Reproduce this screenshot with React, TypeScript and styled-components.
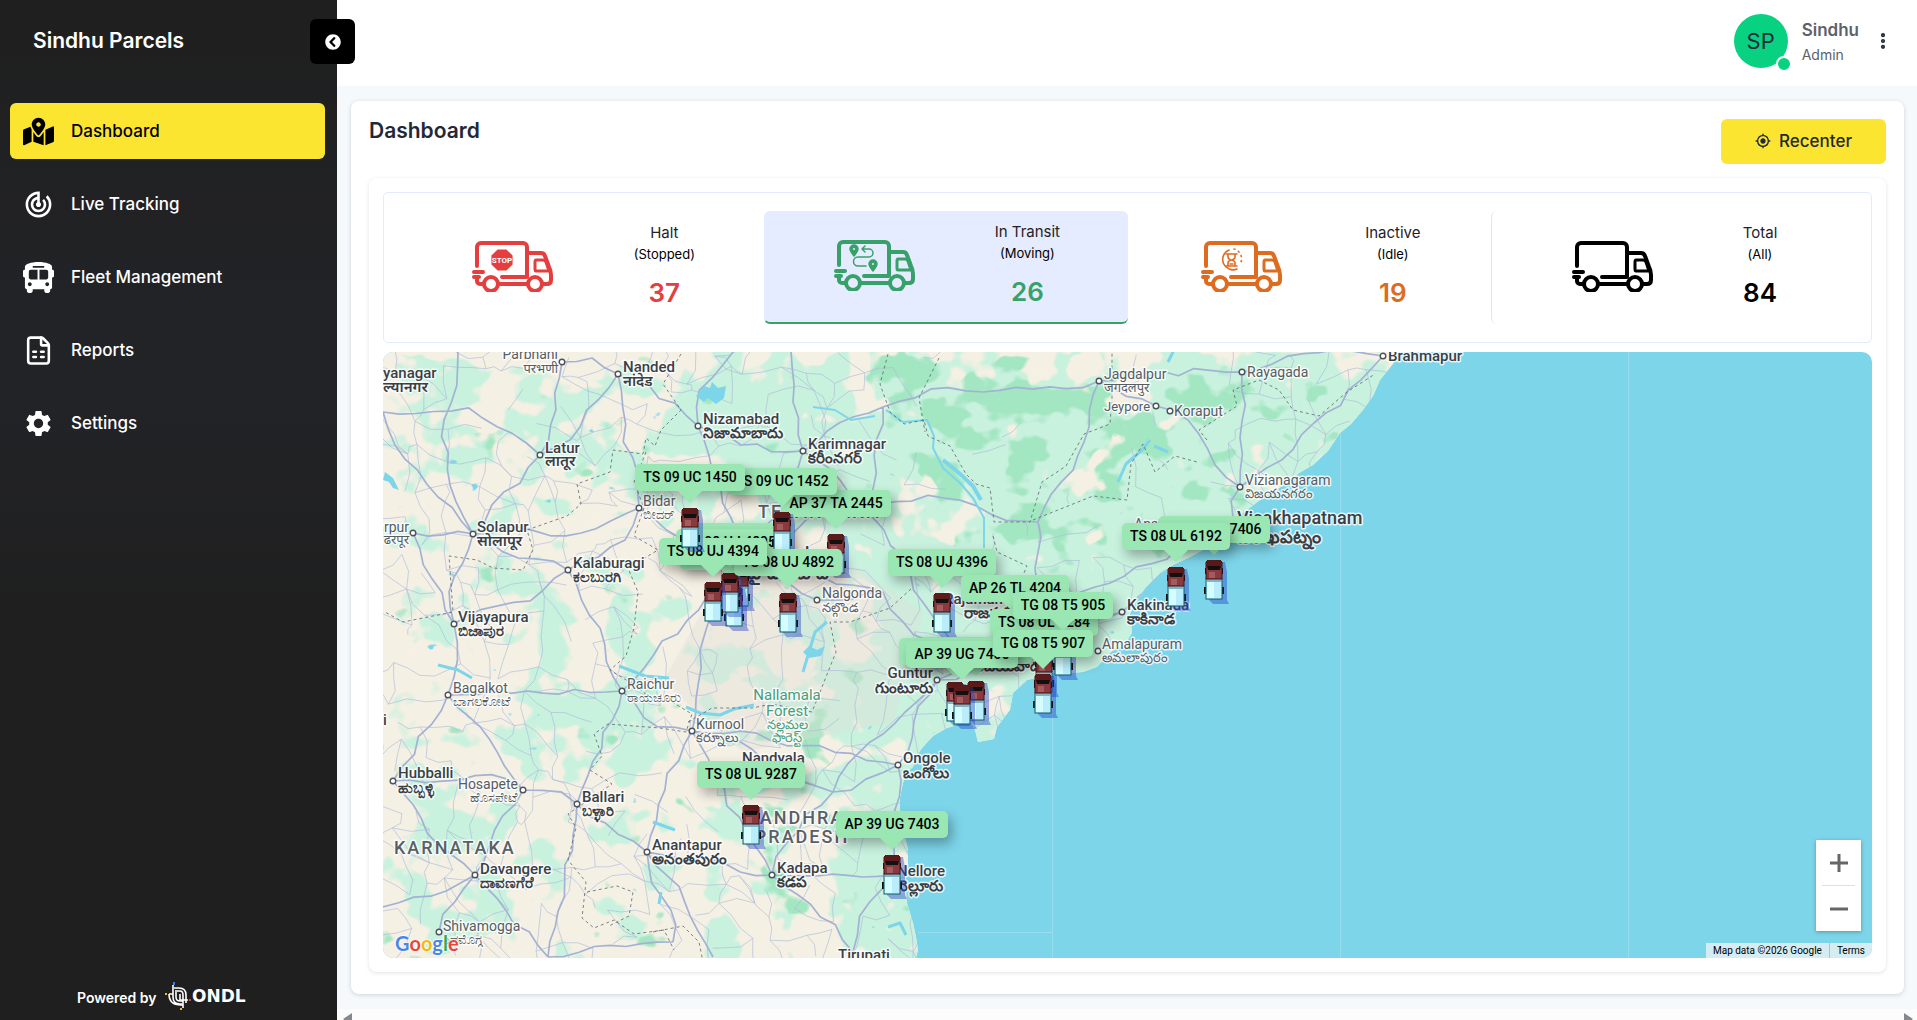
import React from "react";
import styled, { createGlobalStyle, css } from "styled-components";
import {
  FaMapMarkedAlt,
  FaBusAlt,
  FaChevronCircleLeft,
} from "react-icons/fa";
import { MdTrackChanges, MdSettings, MdMyLocation } from "react-icons/md";
import { FileSpreadsheet, EllipsisVertical } from "lucide-react";

const GlobalStyle = createGlobalStyle`
  *, *::before, *::after { box-sizing: border-box; }
  body {
    margin: 0;
    background: #f5f9fc;
    color: #1f2937;
    font-family: Inter, "Liberation Sans", sans-serif;
  }
  button { font-family: inherit; cursor: pointer; }
`;

/* ---------- shell ---------- */

const Shell = styled.div`
  display: flex;
  min-height: 100vh;
`;

const Sidebar = styled.aside`
  position: relative;
  flex: 0 0 337px;
  display: flex;
  flex-direction: column;
  background: linear-gradient(#1f1f1f, #222326 30%, #222326 40%, #1f1f1f 62%);
  color: #fff;
`;

const Brand = styled.div`
  padding: 26px 33px 0;
  height: 103px;
  font-size: 21px;
  line-height: 30px;
  font-weight: 600;
`;

const Collapse = styled.button`
  position: absolute;
  z-index: 2;
  top: 19px;
  right: -18px;
  width: 45px;
  height: 45px;
  display: grid;
  place-items: center;
  border: 0;
  border-radius: 6px;
  background: #000;
  color: #fff;
`;

const Nav = styled.nav`
  display: flex;
  flex-direction: column;
  gap: 17px;
  padding: 0 12px 0 10px;
`;

const NavLink = styled.a<{ $active?: boolean }>`
  display: flex;
  align-items: center;
  gap: 17px;
  height: 56px;
  padding: 0 13px;
  border-radius: 6px;
  font-size: 17px;
  font-weight: 500;
  text-decoration: none;
  color: ${(p) => (p.$active ? "#000" : "#fff")};
  background: ${(p) => (p.$active ? "#fbe531" : "transparent")};
`;

const Powered = styled.footer`
  display: flex;
  align-items: center;
  gap: 8px;
  margin-top: auto;
  padding: 0 0 8px 77px;
  font-size: 14px;
  font-weight: 600;
`;

const Main = styled.main`
  flex: 1;
  min-width: 0;
  display: flex;
  flex-direction: column;
`;

const TopBar = styled.header`
  display: flex;
  justify-content: flex-end;
  height: 86px;
  padding: 14px 24px 0 0;
  gap: 14px;
  background: #fff;
`;

const Avatar = styled.div`
  position: relative;
  width: 54px;
  height: 54px;
  display: grid;
  place-items: center;
  border-radius: 50%;
  background: #08d282;
  font-size: 22px;
`;

const Status = styled.span`
  position: absolute;
  right: -4px;
  bottom: -4px;
  width: 16px;
  height: 16px;
  border: 2px solid #fff;
  border-radius: 50%;
  background: #08d282;
`;

const Who = styled.div`
  padding-top: 4px;
  line-height: 24px;
  color: #5d616b;
  strong { display: block; font-size: 17px; font-weight: 600; }
  span { font-size: 14px; }
`;

const MenuButton = styled.button`
  align-self: flex-start;
  height: 54px;
  padding: 0;
  border: 0;
  background: none;
  color: #1f2937;
  display: grid;
  place-items: center;
`;

const Page = styled.div`
  flex: 1;
  display: flex;
  padding: 15px 13px 15px 14px;
`;

const Panel = styled.section`
  flex: 1;
  min-width: 0;
  display: flex;
  flex-direction: column;
  gap: 14px;
  padding: 18px 18px 22px;
  border-radius: 8px;
  background: #fff;
  box-shadow: 0 1px 4px rgba(40, 60, 80, 0.2);
`;

const PanelHead = styled.div`
  display: flex;
  justify-content: space-between;
  align-items: flex-start;
`;

const Title = styled.h1`
  margin: 0;
  font-size: 21px;
  line-height: 23px;
  font-weight: 600;
`;

const Recenter = styled.button`
  display: flex;
  align-items: center;
  justify-content: center;
  gap: 8px;
  width: 165px;
  height: 45px;
  padding: 0 0 2px;
  border: 0;
  border-radius: 6px;
  background: #fbe531;
  color: #1f2937;
  font-size: 17px;
  font-weight: 500;
`;

const Inner = styled.div`
  flex: 1;
  display: flex;
  flex-direction: column;
  gap: 9px;
  padding: 14px;
  border-radius: 8px;
  box-shadow: 0 1px 4px rgba(40, 60, 80, 0.14);
`;

/* ---------- counters ---------- */

const Stats = styled.div`
  display: grid;
  grid-template-columns: repeat(4, 1fr);
  padding: 18px 16px;
  border: 1px solid #e3eafd;
  border-radius: 5px;
`;

const Stat = styled.button<{ $selected?: boolean; $line?: boolean }>`
  display: flex;
  align-items: center;
  justify-content: space-evenly;
  height: 113px;
  padding: 0 0 3px;
  border: 0;
  border-left: 1px solid ${(p) => (p.$line ? "#dfe7f7" : "transparent")};
  border-radius: 6px;
  background: none;
  color: #000;
  ${(p) =>
    p.$selected &&
    css`
      background: #e5ecff;
      border-bottom: 2px solid #38a169;
    `}
`;

const StatText = styled.span<{ $color: string }>`
  display: flex;
  flex-direction: column;
  align-items: center;
  font-size: 15px;
  line-height: 22px;
  color: #1f2228;
  small { font-size: 13px; line-height: 21px; color: #000; }
  strong {
    padding-top: 11px;
    font-size: 26px;
    line-height: 34px;
    font-weight: 600;
    color: ${(p) => p.$color};
  }
`;

type Cargo = "stop" | "route" | "idle" | "none";

function TruckIcon({ color, cargo }: { color: string; cargo: Cargo }) {
  return (
    <svg width="95" height="52" viewBox="-2 -1 95 52" fill="none" stroke={color} strokeWidth="4" strokeLinecap="round" strokeLinejoin="round" aria-hidden="true">
      <path d="M5 25V6a4 4 0 0 1 4-4h42a4 4 0 0 1 4 4v30H30" />
      <path d="M2 31h9M2 36h5M5 37v3a3 3 0 0 0 3 3h3M28 43h27M55 12h14q3 0 4 3l4 11q2 4 2 8v5q0 4-4 4h-4" />
      <path d="M64 19h7q2 0 3 2l3 9H64q-1 0-1-2v-7q0-2 1-2z" strokeWidth="3" />
      <circle cx="19" cy="43" r="7" />
      <circle cx="63" cy="43" r="7" />
      {cargo === "stop" && (
        <g stroke="none">
          <path d="M25.600 8.400h8.800l6.200 6.200v8.800l-6.200 6.200h-8.800l-6.200-6.200v-8.800z" fill={color} />
          <text x="30" y="22" textAnchor="middle" fontFamily="Roboto, sans-serif" fontWeight="700" fontSize="8" fill="#fff">STOP</text>
        </g>
      )}
      {cargo === "route" && (
        <g strokeWidth="1.500">
          <path d="M20 16q-4-5-4-7a4 4 0 0 1 8 0q0 2-4 7zM39 31q-4-5-4-7a4 4 0 0 1 8 0q0 2-4 7z" fill={color} />
          <path d="M28 9h7a4 4 0 0 1 0 8H24a4 4 0 0 0 0 9h8M31 6l-3 3 3 3" />
          <circle cx="20" cy="9" r="1" fill="#e5ecff" stroke="none" />
          <circle cx="39" cy="24" r="1" fill="#e5ecff" stroke="none" />
        </g>
      )}
      {cargo === "idle" && (
        <g strokeWidth="1.600">
          <path d="M28 9a10 10 0 1 0 8 19" />
          <path d="M33 8a10 10 0 0 1 7 13" strokeDasharray="1 4" />
          <path d="M25 13h11M25 25h11M27 13v3q0 2 3 3-3 1-3 3v3M34 13v3q0 2-3 3 3 1 3 3v3M29 23h3" />
        </g>
      )}
    </svg>
  );
}

/* ---------- map ---------- */

const MapBox = styled.div`
  position: relative;
  flex: 1;
  min-height: 400px;
  overflow: hidden;
  border-radius: 10px;
  background: #7dd5e9;
`;

const Terrain = styled.svg`
  position: absolute;
  inset: 0 auto auto 0;
  text {
    font-family: Roboto, "Noto Sans", sans-serif;
    paint-order: stroke;
    stroke: #fff;
    stroke-opacity: 0.8;
    stroke-width: 3px;
    stroke-linejoin: round;
  }
`;

const Pin = styled.div`
  position: absolute;
  display: flex;
  flex-direction: column;
  align-items: center;
  gap: 17px;
  width: 120px;
  margin-left: -60px;
`;

const Bubble = styled.span`
  position: relative;
  padding: 0 8px;
  border-radius: 5px;
  background: #9be7b4;
  box-shadow: 4px 6px 12px rgba(0, 0, 0, 0.3);
  font-family: Roboto, sans-serif;
  font-size: 14px;
  line-height: 27px;
  font-weight: 500;
  color: #000;
  white-space: nowrap;
  &::after {
    content: "";
    position: absolute;
    left: 50%;
    top: 100%;
    margin-left: -12px;
    border: 12px solid transparent;
    border-bottom: 0;
    border-top-color: #9be7b4;
  }
`;

const ZoomBox = styled.div`
  position: absolute;
  right: 11px;
  bottom: 27px;
  width: 45px;
  display: flex;
  flex-direction: column;
  background: #fff;
  box-shadow: 0 1px 4px rgba(0, 0, 0, 0.3);
  button {
    height: 45px;
    padding: 0;
    border: 0;
    background: none;
    color: #666;
    display: grid;
    place-items: center;
  }
  hr {
    width: 33px;
    height: 1px;
    margin: 0 auto;
    border: 0;
    background: #e0e0e0;
  }
`;

const Credits = styled.div`
  position: absolute;
  right: 0;
  bottom: 0;
  display: flex;
  gap: 1px;
  font-family: Roboto, sans-serif;
  font-size: 10px;
  line-height: 15px;
  span, a {
    padding: 0 7px;
    background: #d5edf2;
    color: #000;
    text-decoration: none;
  }
`;

const Logo = styled.a`
  position: absolute;
  left: 12px;
  bottom: 2px;
  font-family: Lato, sans-serif;
  font-size: 20px;
  line-height: 26px;
  font-weight: 700;
  text-decoration: none;
  text-shadow: 0 0 2px #fff, 0 0 2px #fff, 0 0 2px #fff;
`;

const Letter = styled.span<{ $c: string }>`
  color: ${(p) => p.$c};
`;

const COAST =
  "M-5-5H1018L1010 12 997 28 990 44 980 58 968 72 957 81 945 99 930 113 916 121 904 131 877 148 860 161 848 176 837 185 822 197 807 205 790 213 777 221 763 235 754 248 747 262 749 281 742 292 730 298 714 315 700 320 687 321 670 321 657 325 644 328 630 341 627 358 614 375 611 387 595 390 592 378 588 370 577 372 564 376 550 384 540 395 533 404 530 415 524 420 520 431 517 445 517 458 522 475 522 485 525 498 525 511 522 530 524 551 530 571 533 585 535 598 532 610H-5Z";

/* x, y of each town that the highways meet at */
const T: Record<string, [number, number]> = {
  nw: [0, 60], par: [179, 10], nan: [235, 22], niz: [315, 74], lat: [157, 103], sol: [90, 182], pan: [30, 181],
  kal: [185, 218], vij: [71, 272], bid: [256, 156], bag: [65, 343], rai: [239, 339], kur: [309, 379], hub: [10, 429],
  hos: [140, 438], bal: [194, 452], ana: [264, 500], dav: [92, 523], shi: [56, 580], kad: [389, 523], nel: [510, 523],
  ong: [515, 413], gun: [554, 328], kar: [420, 99], nal: [434, 248], hyd: [360, 212], vja: [590, 318], raj: [655, 262],
  kak: [739, 260], viz: [857, 135], vsk: [850, 165], ray: [859, 20], jag: [716, 29], jey: [773, 54], bra: [1000, 4],
  bha: [655, 170], war: [480, 152], tir: [470, 600], sw: [0, 555], s1: [165, 605], s2: [330, 605], n1: [75, 0],
  n2: [350, 0], n3: [500, 55], n4: [600, 40], ads: [408, 0], suy: [500, 240], mid: [450, 440], chi: [290, 590],
};
const HIGHWAYS = [
  "nw-lat", "n1-sol", "par-nan", "par-lat", "nan-niz", "niz-hyd", "nan-lat", "lat-sol", "pan-sol", "sol-kal", "sol-vij",
  "sol-bid", "bid-hyd", "bid-nan", "kal-bid", "vij-bag", "vij-kal", "bag-hub", "bag-hos", "hub-hos", "hos-bal", "bal-ana",
  "hos-dav", "hub-dav", "dav-sw", "dav-shi", "dav-s1", "bal-rai", "rai-kal", "rai-kur", "kur-hyd", "hyd-rai", "kur-ana",
  "ana-chi", "ana-kad", "kur-kad", "kad-tir", "kad-nel", "nel-tir", "nel-ong", "ong-gun", "gun-vja", "vja-suy", "suy-nal",
  "nal-hyd", "suy-hyd", "vja-raj", "raj-kak", "kak-vsk", "vsk-viz", "viz-ray", "viz-jey", "jey-jag", "viz-bra", "hyd-war",
  "hyd-kar", "niz-kar", "kar-war", "kar-n3", "n3-n4", "n4-jag", "n2-niz", "ads-kar", "war-bha", "bha-raj", "bha-jag",
  "ray-bra", "jag-ray", "gun-mid", "mid-kad", "mid-kur", "ong-mid", "vja-war", "bal-s1", "ana-s2", "bag-rai", "pan-vij",
  "sol-nw", "kak-gun", "raj-vsk", "ong-kur", "chi-s1", "n3-war",
];

function seeded(seed: number) {
  let s = seed;
  return () => {
    s = (s * 16807) % 2147483647;
    return s / 2147483647;
  };
}

function wander(a: [number, number], b: [number, number], rnd: () => number, amount: number) {
  const len = Math.hypot(b[0] - a[0], b[1] - a[1]);
  const steps = Math.max(2, Math.round(len / 16));
  let d = `M${a[0]} ${a[1]}`;
  let drift = 0;
  for (let i = 1; i < steps; i++) {
    const t = i / steps;
    drift += (rnd() - 0.5) * amount;
    const off = drift * Math.sin(Math.PI * t) * 1.6;
    const x = a[0] + (b[0] - a[0]) * t - ((b[1] - a[1]) / len) * off;
    const y = a[1] + (b[1] - a[1]) * t + ((b[0] - a[0]) / len) * off;
    d += `L${x.toFixed(1)} ${y.toFixed(1)}`;
  }
  return d + `L${b[0]} ${b[1]}`;
}

function highwayPath() {
  const rnd = seeded(77);
  return HIGHWAYS.map((h) => {
    const [a, b] = h.split("-");
    return wander(T[a], T[b], rnd, 9);
  }).join("");
}

function lanePath() {
  const rnd = seeded(4242);
  const step = 27;
  const cols = 40;
  const rows = 24;
  const pts: [number, number][][] = [];
  for (let r = 0; r < rows; r++) {
    pts.push([]);
    for (let c = 0; c < cols; c++) {
      pts[r].push([c * step - 10 + (rnd() - 0.5) * 24, r * step - 6 + (rnd() - 0.5) * 24]);
    }
  }
  let d = "";
  for (let r = 0; r < rows - 1; r++) {
    for (let c = 0; c < cols - 1; c++) {
      const [x, y] = pts[r][c];
      const forest = x > 470 && x < 840 && y < 200;
      const keep = forest ? 0.12 : 0.58;
      if (rnd() < keep) d += wander(pts[r][c], pts[r][c + 1], rnd, 6);
      if (rnd() < keep) d += wander(pts[r][c], pts[r + 1][c], rnd, 6);
      if (rnd() < keep * 0.3) d += wander(pts[r][c], pts[r + 1][c + 1], rnd, 6);
    }
  }
  return d;
}

const highways = highwayPath();
const lanes = lanePath();

type Label = {
  x: number; y: number; t: string; s?: number; w?: number; n?: string; nx?: number; ny?: number;
  dot?: [number, number]; end?: boolean; mid?: boolean; c?: string; track?: number;
};
const LABELS: Label[] = [
  { x: 0, y: 26, t: "yanagar", w: 500, n: "ल्यानगर", ny: 40 },
  { x: 175, y: 7, t: "Parbhani", n: "परभणी", ny: 21, dot: [179, 10], end: true },
  { x: 240, y: 20, t: "Nanded", w: 500, n: "नांदेड", ny: 34, dot: [235, 22] },
  { x: 320, y: 72, t: "Nizamabad", w: 500, n: "నిజామాబాదు", ny: 86, dot: [315, 74] },
  { x: 162, y: 101, t: "Latur", w: 500, n: "लातूर", ny: 114, dot: [157, 103] },
  { x: 94, y: 180, t: "Solapur", w: 500, n: "सोलापूर", ny: 194, dot: [90, 182] },
  { x: 26, y: 180, t: "arpur", n: "ढरपूर", ny: 192, dot: [30, 181], end: true },
  { x: 190, y: 216, t: "Kalaburagi", w: 500, n: "ಕಲಬುರಗಿ", ny: 230, dot: [185, 218] },
  { x: 75, y: 270, t: "Vijayapura", w: 500, n: "ಬಿಜಾಪುರ", ny: 284, dot: [71, 272] },
  { x: 260, y: 154, t: "Bidar", n: "ಬೀದರ್", ny: 167, dot: [256, 156] },
  { x: 70, y: 341, t: "Bagalkot", n: "ಬಾಗಲಕೋಟೆ", ny: 354, dot: [65, 343] },
  { x: 244, y: 337, t: "Raichur", n: "ರಾಯಚೂರು", ny: 350, dot: [239, 339] },
  { x: 313, y: 377, t: "Kurnool", n: "కర్నూలు", ny: 390, dot: [309, 379] },
  { x: 15, y: 426, t: "Hubballi", w: 500, n: "ಹುಬ್ಬಳ್ಳಿ", ny: 441, dot: [10, 429] },
  { x: 135, y: 437, t: "Hosapete", n: "ಹೊಸಪೇಟೆ", ny: 450, dot: [140, 438], end: true },
  { x: 199, y: 450, t: "Ballari", w: 500, n: "ಬಳ್ಳಾರಿ", ny: 464, dot: [194, 452] },
  { x: 11, y: 502, t: "KARNATAKA", s: 18, w: 500, track: 2, c: "#5a5f66" },
  { x: 269, y: 498, t: "Anantapur", w: 500, n: "అనంతపురం", ny: 512, dot: [264, 500] },
  { x: 97, y: 522, t: "Davangere", w: 500, n: "ದಾವಣಗೆರೆ", ny: 536, dot: [92, 523] },
  { x: 60, y: 579, t: "Shivamogga", n: "ಶಿವಮೊಗ್ಗ", ny: 592, dot: [56, 580] },
  { x: 404, y: 348, t: "Nallamala", s: 15, mid: true, c: "#4a9d78" },
  { x: 404, y: 364, t: "Forest", s: 15, mid: true, c: "#4a9d78", n: "నల్లమల", ny: 377 },
  { x: 404, y: 390, t: "ఫారెస్ట్", mid: true, c: "#4a9d78", s: 13 },
  { x: 359, y: 411, t: "Nandyala", w: 500 },
  { x: 394, y: 521, t: "Kadapa", w: 500, n: "కడప", ny: 535, dot: [389, 523] },
  { x: 419, y: 472, t: "ANDHRA", s: 18, w: 500, mid: true, track: 2, c: "#5a5f66" },
  { x: 419, y: 491, t: "PRADESH", s: 18, w: 500, mid: true, track: 2, c: "#5a5f66" },
  { x: 0, y: 373, t: "i", w: 500 },
  { x: 514, y: 524, t: "Nellore", w: 500, n: "నెల్లూరు", ny: 539 },
  { x: 520, y: 411, t: "Ongole", w: 500, n: "ఒంగోలు", ny: 426, dot: [515, 413] },
  { x: 550, y: 326, t: "Guntur", w: 500, n: "గుంటూరు", ny: 341, dot: [554, 328], end: true },
  { x: 455, y: 608, t: "Tirupati", w: 500 },
  { x: 590, y: 304, t: "Vijayawada", w: 500, n: "విజయవాడ", ny: 319 },
  { x: 719, y: 297, t: "Amalapuram", n: "అమలాపురం", ny: 310, dot: [715, 299] },
  { x: 744, y: 258, t: "Kakinada", w: 500, n: "కాకినాడ", ny: 272, dot: [739, 260] },
  { x: 751, y: 177, t: "Anakapalli" },
  { x: 854, y: 172, t: "Visakhapatnam", s: 18, w: 500, n: "విశాఖపట్నం", ny: 191 },
  { x: 862, y: 133, t: "Vizianagaram", n: "విజయనగరం", ny: 146, dot: [857, 135] },
  { x: 864, y: 25, t: "Rayagada", dot: [859, 20] },
  { x: 1005, y: 9, t: "Brahmapur", w: 500, dot: [1000, 4] },
  { x: 721, y: 27, t: "Jagdalpur", n: "जगदलपुर", ny: 40, dot: [716, 29] },
  { x: 721, y: 59, t: "Jeypore", s: 13, dot: [773, 54] },
  { x: 791, y: 64, t: "Koraput", dot: [787, 59] },
  { x: 425, y: 97, t: "Karimnagar", w: 500, n: "కరీంనగర్", ny: 111, dot: [420, 99] },
  { x: 439, y: 246, t: "Nalgonda", n: "నల్గొండ", ny: 260, dot: [434, 248] },
  { x: 561, y: 252, t: "Rajamahendravaram", w: 500, n: "రాజమహేంద్రవరం", nx: 581, ny: 266 },
  { x: 375, y: 166, t: "TELANGANA", s: 18, w: 500, track: 2, c: "#5a5f66" },
  { x: 365, y: 208, t: "Hyderabad", s: 18, w: 500, n: "హైదరాబాద్", ny: 227 },
];

/* plate shown in the bubble, tip x, bubble top */
const VEHICLES: [string, number, number][] = [
  ["TS 08 UJ 4390", 357, 171],
  ["TS 08 UJ 4391", 351, 191],
  ["TS 08 UJ 4895", 347, 177],
  ["AP 37 TA 2445", 453, 138],
  ["TS 09 UC 1452", 399, 116],
  ["TS 08 UJ 4892", 405, 197],
  ["TS 08 UJ 4394", 330, 186],
  ["TS 09 UC 1450", 307, 112],
  ["TS 08 UJ 4396", 559, 197],
  ["AP 39 UG 7406", 831, 164],
  ["TS 08 UL 6192", 793, 171],
  ["AP 26 TL 4204", 632, 223],
  ["TS 08 UL 4284", 661, 257],
  ["TG 08 T5 905", 680, 240],
  ["AP 39 UG 7404", 593, 285],
  ["AP 39 UG 7405", 572, 286],
  ["AP 39 UG 7406", 579, 289],
  ["TG 08 T5 907", 660, 278],
  ["TS 08 UL 9287", 368, 409],
  ["AP 39 UG 7403", 509, 459],
];

function Lorry() {
  return (
    <svg width="30" height="45" viewBox="-6 0 30 45" aria-hidden="true">
      <path d="M6 2h14l2 10v28l2 4H8l-4-4z" fill="#2440c8" fillOpacity="0.420" />
      <path d="M0 8h18v6H0zM-1 27h20v7H-1z" fill="#111" />
      <rect x="1" y="19" width="16" height="20" fill="#b9edfb" stroke="#0d5f6c" />
      <path d="M2 22h7v16H2z" fill="#d5fcff" />
      <path d="M2 19h14v3H2z" fill="#7eb6c8" />
      <path d="M3 0h12l2 2v17H1V2z" fill="#8a3a3e" stroke="#4a1213" />
      <path d="M3 0h12l2 2v4H1V2z" fill="#5c1a1a" />
      <path d="M2 6h14l-1 4H3z" fill="#111" />
      <path d="M4 12h6v6H4z" fill="#a25c60" />
    </svg>
  );
}

function LabelText({ l }: { l: Label }) {
  const anchor = l.end ? "end" : l.mid ? "middle" : "start";
  const size = l.s ?? (l.w ? 15 : 14);
  const nativeSize = size > 15 ? 18 : l.w ? 15 : 13;
  const color = l.c ?? (l.w ? "#3a3f45" : "#575d63");
  return (
    <>
      {l.dot && <circle cx={l.dot[0]} cy={l.dot[1]} r="2.800" fill="#fff" stroke="#4d5358" strokeWidth="1.400" />}
      <text x={l.x} y={l.y} fontSize={size} fontWeight={l.w ?? 400} textAnchor={anchor} fill={color} letterSpacing={l.track}>{l.t}</text>
      {l.n && (
        <text x={l.nx ?? l.x} y={l.ny} fontSize={nativeSize} fontWeight={l.w ? 600 : 400} textAnchor={anchor} fill={color}>{l.n}</text>
      )}
    </>
  );
}

function PatchFilter({ id, seed, freq, color, cut }: { id: string; seed: number; freq: string; color: string; cut: number }) {
  return (
    <filter id={id} x="0" y="0" width="1040" height="610" filterUnits="userSpaceOnUse" colorInterpolationFilters="sRGB">
      <feGaussianBlur in="SourceGraphic" stdDeviation="22" result="zone" />
      <feTurbulence type="fractalNoise" baseFrequency={freq} numOctaves="3" seed={seed} />
      <feColorMatrix values="0 0 0 0 0  0 0 0 0 0  0 0 0 0 0  1 0 0 0 0" result="noise" />
      <feComposite in="noise" in2="zone" operator="arithmetic" k2="14" k3="14" k4={-14 * cut} result="mask" />
      <feFlood floodColor={color} />
      <feComposite in2="mask" operator="in" />
    </filter>
  );
}

function TerrainMap() {
  return (
    <Terrain width="1489" height="606" viewBox="0 0 1489 606" role="img" aria-label="Map of Telangana and Andhra Pradesh">
      <defs>
        <clipPath id="land"><path d={COAST} /></clipPath>
        <PatchFilter id="mint" seed={8} freq="0.022 0.024" color="#c8f1de" cut={0.82} />
        <PatchFilter id="wood" seed={21} freq="0.024 0.030" color="#a3e6c2" cut={0.82} />
        <PatchFilter id="sand" seed={5} freq="0.026 0.026" color="#f5f0e4" cut={0.86} />
        <PatchFilter id="lake" seed={31} freq="0.050 0.070" color="#7dd5e9" cut={0.98} />
      </defs>
      <g clipPath="url(#land)">
        <path d="M0 0h1040v610H0z" fill="#f5f0e4" />
        <g filter="url(#mint)">
          <path d="M0 0h1040v610H0z" fillOpacity="0.270" />
          <path d="M0 0H360L300 140 150 120H0z" fillOpacity="0.160" />
          <path d="M280 0H1040V320H700L540 270 480 220 370 140z" fillOpacity="0.500" />
          <path d="M520 250H760V390H560L520 620H470V420L380 300 480 320z" fillOpacity="0.450" />
          <path d="M0 360 60 440 130 600H0zM150 250h70l60 120-60 60-80-10z" fillOpacity="0.200" />
        </g>
        <g filter="url(#wood)">
          <path d="M0 0h1040v610H0z" fillOpacity="0.080" />
          <path d="M470 0H880V110L760 190 650 230 540 150zM500 0" fillOpacity="0.250" />
          <path d="M370 325h60l10 60-20 80 10 130h-40l-20-100 30-100z" fillOpacity="0.280" />
          <path d="M0 530h30v80H0z" fillOpacity="0.300" />
          <path d="M490 0h160l-20 70h-140zM690 50h80v50h-90zM890 10h80v50h-60z" fillOpacity="0.150" />
        </g>
        <g filter="url(#sand)">
          <path d="M0 0h1040v610H0z" fillOpacity="0.150" />
          <path d="M440 0h60v50h-60zM670 0h100v45h-110zM520 130h60v60h-60z" fillOpacity="0.450" />
          <path d="M690 80h90l-50 60h-50zM860 70h60v50h-60z" fillOpacity="0.250" />
        </g>
        <g filter="url(#lake)"><path d="M0 0h1040v610H0z" fillOpacity="0.160" /></g>
        <path d="M330 240l120-40 90 60-30 110-150 30-80-70z" fill="#e2ddd6" fillOpacity="0.350" />

        <path d={lanes} fill="none" stroke="#aebcd8" strokeOpacity="0.650" strokeWidth="1" strokeLinejoin="round" />
        <path d={highways} fill="none" stroke="#a3b2d3" strokeWidth="1.700" strokeLinejoin="round" />

        <g fill="none" stroke="#7dd5e9" strokeWidth="2" strokeLinejoin="round">
          <path d="M430 55l22 3 16 10 24-4M503 58l17 12 24-2 7 16-1 12 10 20 18 16 12 14 11 20 0 30M552 100" />
          <path d="M560 108l15 12 15 14 8 14" strokeWidth="4" />
          <path d="M55 313l20 5 14 8M236 314l26 10 24 2M303 355l14 6 20 2 14-6 20-4M270 470l22 8M278 540l-2 12M505 575l12-4 6 12" strokeWidth="3" />
          <path d="M785 10l10-20M735 130l8-18 16-14 8-10M785 100l-14-6M420 320l12-40 12-10" strokeWidth="3" />
        </g>
        <path d="M313 44l8-10 6 2 2-6 6 6 8-2-2 12-8 6-8-6-4 4zM2 120l8 6 6 12-6-2-4-6-6-2zM420 300l6-6 8 4 8-4-4 10-12 2z" fill="#7dd5e9" />

        <g fill="none" stroke="#5e666e" strokeOpacity="0.800" strokeWidth="1" strokeDasharray="3 3" strokeLinejoin="round">
          <path d="M298 2l-18 30 18 26-20 20-6 16-9-8-3 16-30-4-3 22-33 12 4 20-14 12-40 14 6 20-10 20-30-2-16-8-28-4 4 56-50 10-18-10" />
          <path d="M263 100l-12 30 10 26-10 28 24 14-30 18 10 24-4 36-8 28-16 14 26 16 12 10 24 6 20 12-6 18-26-4-52-4-14 10 8 22-12 14 22 14-44 30 8 14-8 32 18 22-4 36 12 10 20-8 20 14 30-4 10 20M204 540l30-6 16 6-4 24-20 10M270 580l30-6 16 16 4 20" />
          <path d="M305 370l24-14 40 0 20-4 40 8 24-60-6-30 20 0 40-14 22-20" />
          <path d="M505 2l-8 30 10 28 14 12 20-4 4 16 22 10 16 28 10 10 14 4 4 34 36 0 12-40 24-16 18-32 26-10 2-26 0-50M556 6l-20 40 6 34" />
          <path d="M650 168l60-24 34 4 4-36 12-20 12 28 20-16 22 6M610 184l4 16 30 14-6 14 36 14M824 88l-8-10 38-24-4-16 26-10 20 10 14 20 26 6 28-24 28-18" />
        </g>
      </g>
      <path d="M669.500 322v284M957.500 82v524M1245.500 0v606M535 580.500h134" stroke="#a9e2f0" strokeOpacity="0.600" />
      {LABELS.map((l) => <LabelText key={l.t + l.x} l={l} />)}
    </Terrain>
  );
}

const GOOGLE: [string, string][] = [
  ["G", "#4a86e8"], ["o", "#e8453c"], ["o", "#f2b90f"], ["g", "#4a86e8"], ["l", "#34a853"], ["e", "#e8453c"],
];

function OndlMark() {
  return (
    <svg width="90" height="30" viewBox="0 0 90 30" fill="none" stroke="#fff" strokeWidth="2" aria-label="ONDL" role="img">
      <path d="M8 3v12q0 7 7 7h2M11 8v7q0 4 4 4h3M4 12h4M4 12q0 11 12 11h2" strokeWidth="1.600" />
      <path d="M9 6h5q7 0 7 7v8M12 9h3q3 0 3 4v13M15 12v6h8" strokeWidth="1.600" />
      <path d="M9 0v3" stroke="#3f78e0" />
      <path d="M0 12h2M16 26v2" stroke="#e6c229" />
      <path d="M24 18h2" stroke="#d8403a" />
      <text x="27" y="20" fill="#fff" stroke="none" fontFamily="DejaVu Sans, sans-serif" fontSize="17">ONDL</text>
    </svg>
  );
}

const HScroll = styled.div`
  display: flex;
  justify-content: space-between;
  height: 11px;
  padding: 4px 4px 0 6px;
  overflow: hidden;
  background: #fcfcfc;
`;

const NAV = [
  { label: "Dashboard", icon: <FaMapMarkedAlt size={31} />, active: true },
  { label: "Live Tracking", icon: <MdTrackChanges size={31} /> },
  { label: "Fleet Management", icon: <FaBusAlt size={31} /> },
  { label: "Reports", icon: <FileSpreadsheet size={31} /> },
  { label: "Settings", icon: <MdSettings size={31} /> },
];

const STATS: { name: string; note: string; count: number; color: string; cargo: Cargo }[] = [
  { name: "Halt", note: "(Stopped)", count: 37, color: "#e53e3e", cargo: "stop" },
  { name: "In Transit", note: "(Moving)", count: 26, color: "#38a169", cargo: "route" },
  { name: "Inactive", note: "(Idle)", count: 19, color: "#dd6b20", cargo: "idle" },
  { name: "Total", note: "(All)", count: 84, color: "#000", cargo: "none" },
];

export default function App() {
  return (
    <>
      <GlobalStyle />
      <Shell>
        <Sidebar>
          <Brand>Sindhu Parcels</Brand>
          <Collapse aria-label="Collapse menu"><FaChevronCircleLeft size={16} /></Collapse>
          <Nav>
            {NAV.map((n) => (
              <NavLink key={n.label} href="#" $active={n.active}>{n.icon}{n.label}</NavLink>
            ))}
          </Nav>
          <Powered>Powered by <OndlMark /></Powered>
        </Sidebar>
        <Main>
          <TopBar>
            <Avatar>SP<Status /></Avatar>
            <Who><strong>Sindhu</strong><span>Admin</span></Who>
            <MenuButton aria-label="Account menu"><EllipsisVertical size={20} strokeWidth={3} /></MenuButton>
          </TopBar>
          <Page>
            <Panel>
              <PanelHead>
                <Title>Dashboard</Title>
                <Recenter><MdMyLocation size={16} />Recenter</Recenter>
              </PanelHead>
              <Inner>
                <Stats>
                  {STATS.map((s) => (
                    <Stat key={s.name} $selected={s.cargo === "route"} $line={s.cargo === "none"}>
                      <TruckIcon color={s.color} cargo={s.cargo} />
                      <StatText $color={s.color}>
                        {s.name}
                        <small>{s.note}</small>
                        <strong>{s.count}</strong>
                      </StatText>
                    </Stat>
                  ))}
                </Stats>
                <MapBox>
                  <TerrainMap />
                  {VEHICLES.map(([plate, x, y]) => (
                    <Pin key={`${plate}-${x}`} style={{ left: x, top: y }}>
                      <Bubble>{plate}</Bubble>
                      <Lorry />
                    </Pin>
                  ))}
                  <Logo href="#" aria-label="Google">
                    {GOOGLE.map(([ch, c], i) => <Letter key={i} $c={c}>{ch}</Letter>)}
                  </Logo>
                  <ZoomBox>
                    <button aria-label="Zoom in">
                      <svg width="18" height="18" stroke="currentColor" strokeWidth="3"><path d="M9 0v18M0 9h18" /></svg>
                    </button>
                    <hr />
                    <button aria-label="Zoom out">
                      <svg width="18" height="18" stroke="currentColor" strokeWidth="3"><path d="M0 9h18" /></svg>
                    </button>
                  </ZoomBox>
                  <Credits><span>Map data ©2026 Google</span><a href="#">Terms</a></Credits>
                </MapBox>
              </Inner>
            </Panel>
          </Page>
          <HScroll aria-hidden="true">
            <svg width="9" height="12"><path d="M9 0v12L0 6z" fill="#85888c" /></svg>
            <svg width="9" height="12"><path d="M0 0v12L9 6z" fill="#85888c" /></svg>
          </HScroll>
        </Main>
      </Shell>
    </>
  );
}
